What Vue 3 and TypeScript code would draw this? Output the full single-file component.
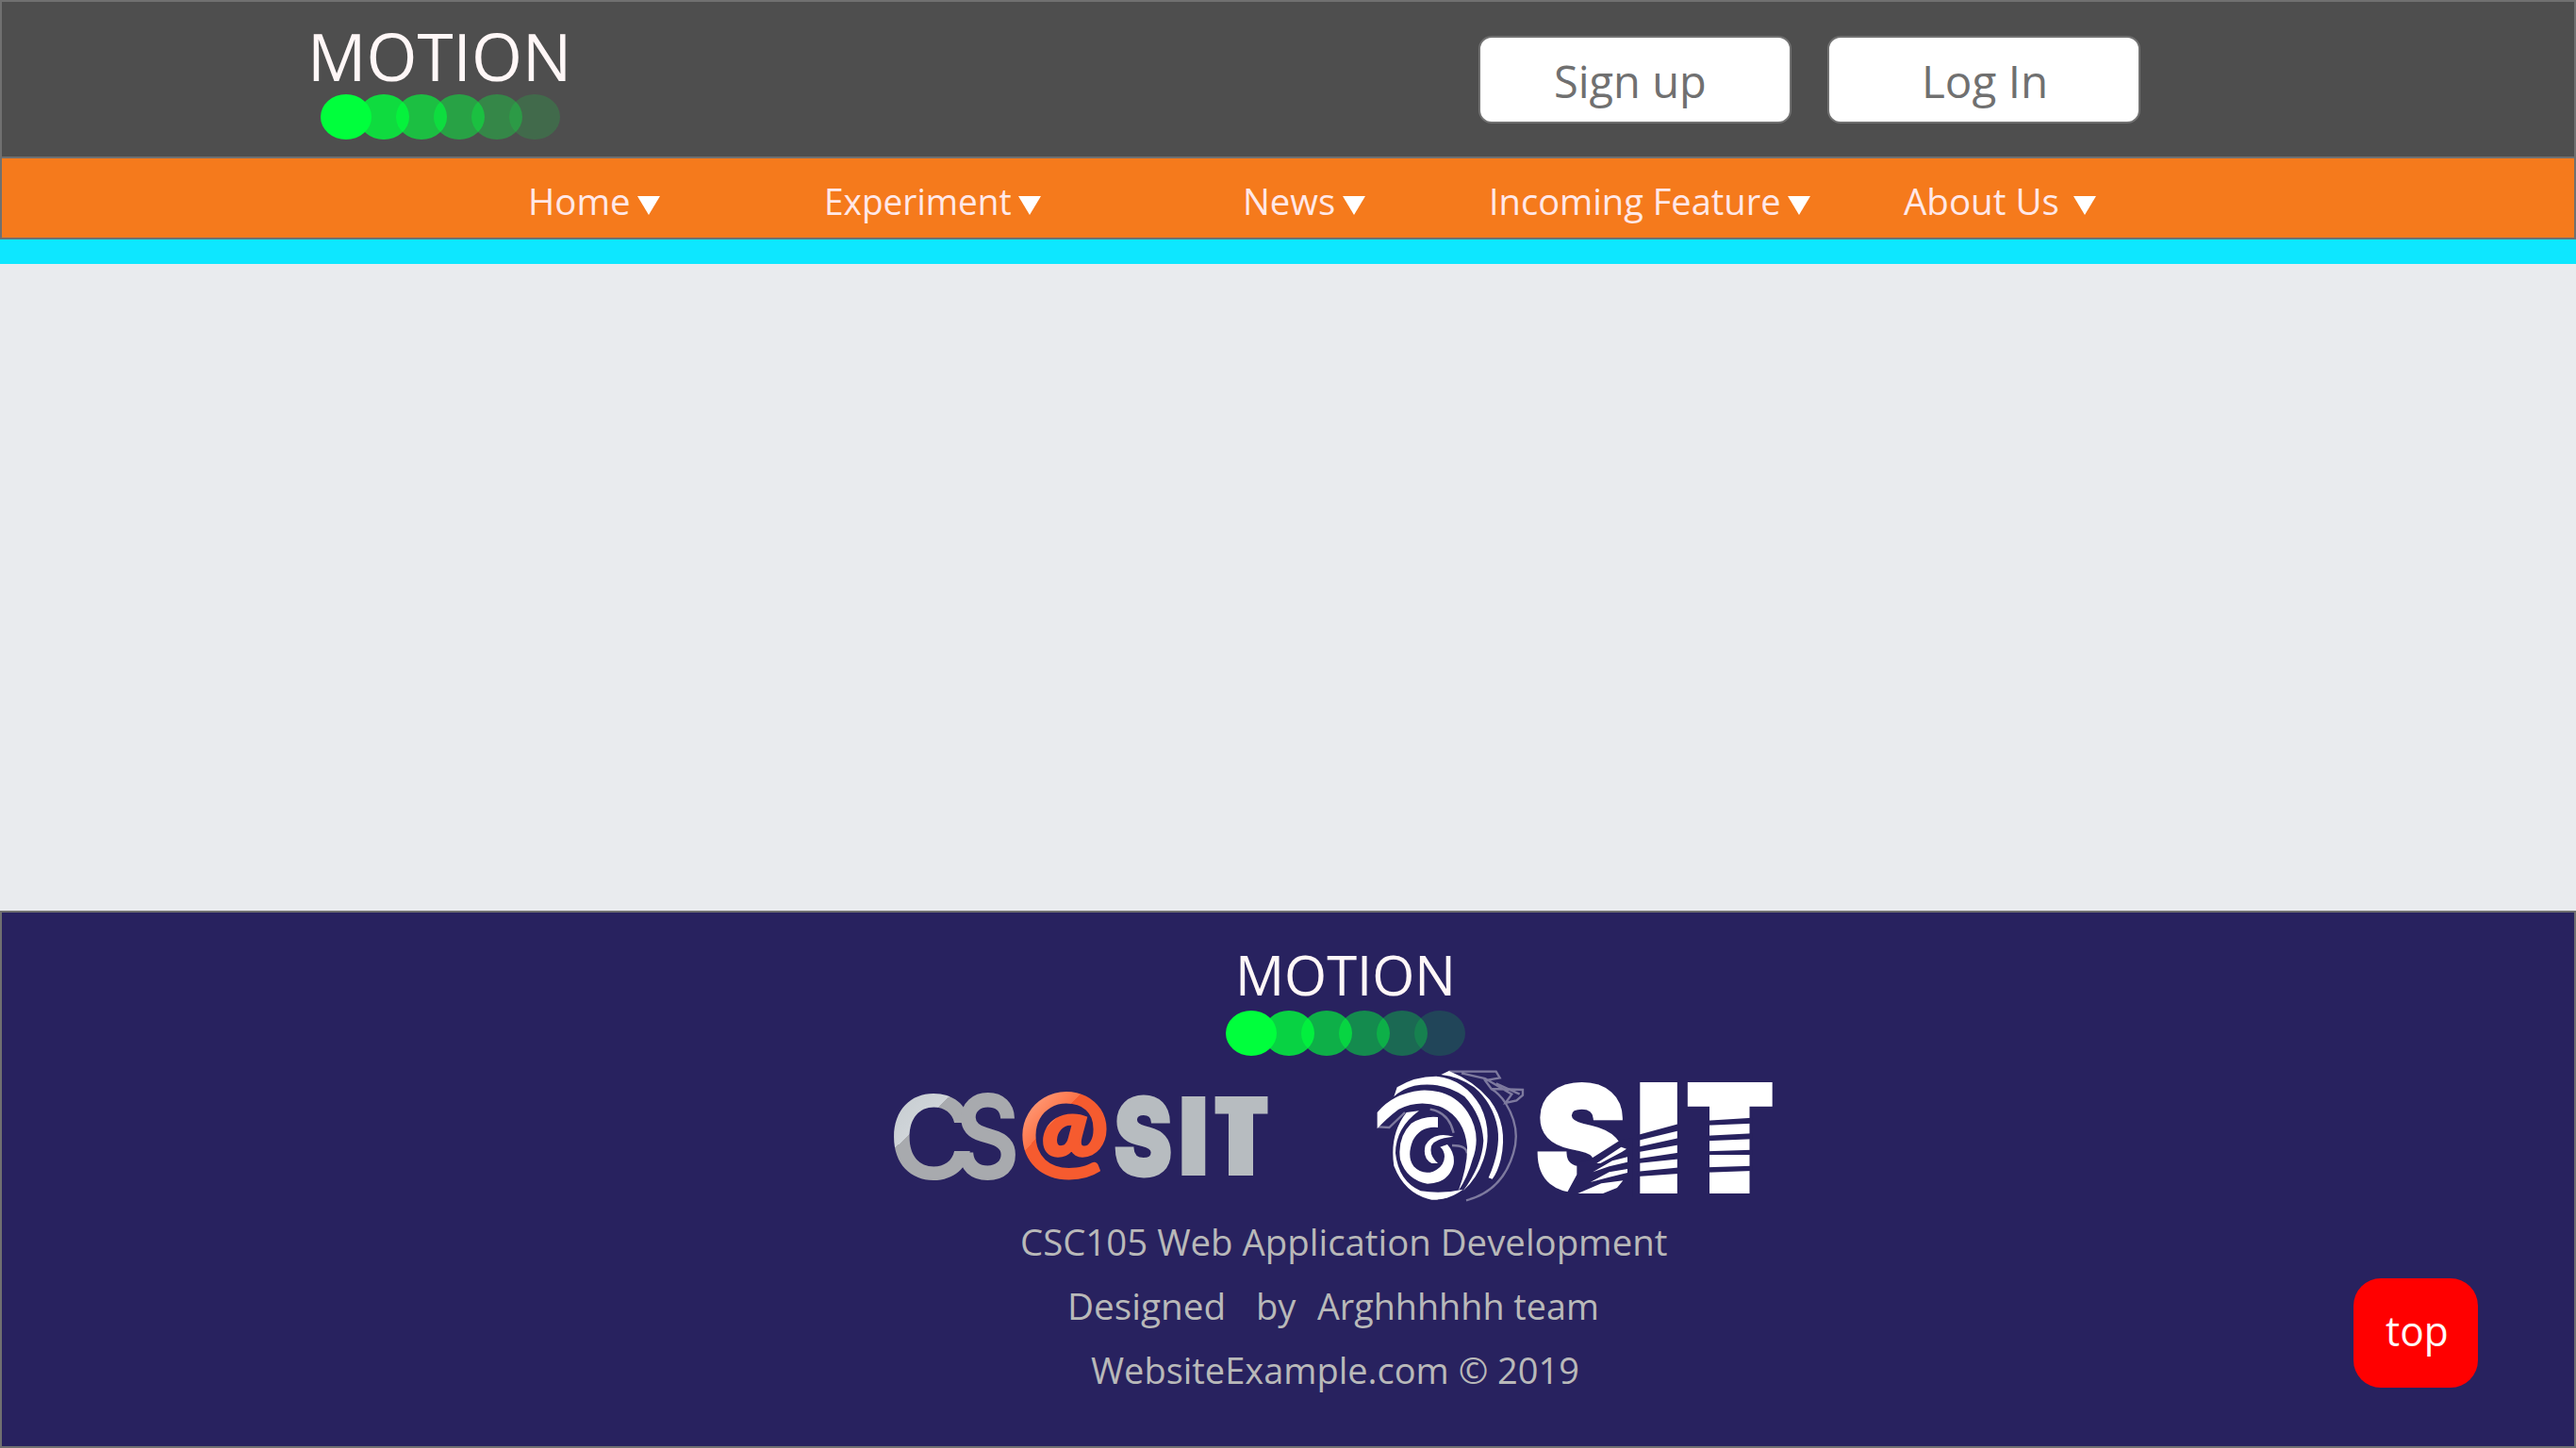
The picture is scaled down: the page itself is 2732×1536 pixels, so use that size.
<script setup lang="ts">
import { h, type FunctionalComponent } from 'vue'

interface LabelProps {
  text: string
  size: number
  width: number
}

// One line of text, set to a fixed advance width. The box is exactly as high as the capitals.
const Label: FunctionalComponent<LabelProps> = (props) => {
  const cap = Math.round(props.size * 0.714)
  return h('svg', { width: props.width, height: cap, style: { overflow: 'visible', display: 'block', flex: 'none' } }, [
    h(
      'text',
      {
        x: 0,
        y: cap,
        'font-size': props.size,
        textLength: props.width,
        lengthAdjust: 'spacingAndGlyphs',
        fill: 'currentColor',
        style: { whiteSpace: 'pre' },
      },
      props.text,
    ),
  ])
}
Label.props = ['text', 'size', 'width']

const fades: number[] = [1, 0.8, 0.64, 0.48, 0.32, 0.16]

const Dots: FunctionalComponent = () =>
  h(
    'svg',
    { width: 254, height: 48, viewBox: '0 0 254 48', style: { display: 'block' } },
    fades.map((o, i) => h('ellipse', { cx: 27 + i * 40, cy: 24, rx: 27, ry: 24, fill: '#00ff3c', 'fill-opacity': o })),
  )

interface NavItem {
  label: string
  width: number
  before: number
  gap: number
}

const nav: NavItem[] = [
  { label: 'Home', width: 108.7, before: 558, gap: 7 },
  { label: 'Experiment', width: 198.7, before: 174.3, gap: 7.3 },
  { label: 'News', width: 98.3, before: 213.7, gap: 8 },
  { label: 'Incoming Feature', width: 309.6, before: 130.9, gap: 7.2 },
  { label: 'About Us', width: 164.9, before: 99.4, gap: 15 },
]
</script>

<template>
  <div class="page">
    <header class="header">
      <div class="brand">
        <Label text="MOTION" :size="70" :width="280.2" />
        <Dots class="brand-dots" />
      </div>
      <div class="auth">
        <button class="auth-btn" type="button"><Label text="Sign up" :size="47.6" :width="161.7" /></button>
        <button class="auth-btn login" type="button"><Label text="Log In" :size="47.6" :width="134.2" /></button>
      </div>
    </header>

    <nav class="nav">
      <a v-for="item in nav" :key="item.label" class="nav-item" :style="{ marginLeft: item.before + 'px' }">
        <Label :text="item.label" :size="39.2" :width="item.width" />
        <svg class="caret" :style="{ marginLeft: item.gap + 'px' }" width="24" height="20" viewBox="0 0 24 20">
          <path d="M0 0H24L12 20Z" fill="#fff" />
        </svg>
      </a>
    </nav>
    <div class="stripe"></div>

    <main class="content"></main>

    <footer class="footer">
      <Label class="f-title" text="MOTION" :size="59" :width="234" />
      <Dots class="f-dots" />

      <div class="logos">
        <svg class="cs-logo" width="420" height="110" viewBox="940 1150 420 110">
          <defs>
            <linearGradient id="cShine" gradientUnits="userSpaceOnUse" x1="6.8" y1="-73.8" x2="53.2" y2="-25.4">
              <stop offset="0" stop-color="#c6ccd0" />
              <stop offset="0.5" stop-color="#d0d5d9" />
              <stop offset="0.5" stop-color="#a8aaae" />
            </linearGradient>
            <linearGradient id="atShine" gradientUnits="userSpaceOnUse" x1="8" y1="-66" x2="60" y2="-16">
              <stop offset="0" stop-color="#ff9f7d" />
              <stop offset="0.46" stop-color="#fd7549" />
              <stop offset="0.46" stop-color="#f65b2f" />
            </linearGradient>
          </defs>
          <g font-size="100">
            <text class="inter-semi" transform="translate(941.7 1250.5) scale(1.26 1.24)" fill="url(#cShine)">C</text>
            <text class="inter-semi" transform="translate(1013.3 1250) scale(1.04 1.225)" fill="#a8aaae" stroke="#a8aaae" stroke-width="1.6">S</text>
            <text class="lato-black" transform="translate(1081 1237) scale(1.125 1.1)" fill="url(#atShine)" stroke="url(#atShine)" stroke-width="2.6">@</text>
            <g fill="#b7bcc0" stroke="#b7bcc0">
              <text class="inter-black" transform="translate(1181.3 1247) scale(0.93 1.14)" stroke-width="2.5">S</text>
              <text class="inter-black" transform="translate(1247.5 1247) scale(1.26 1.158)" stroke="none">I</text>
              <text class="inter-black" transform="translate(1286.2 1247) scale(0.883 1.158)" stroke="none">T</text>
              <rect x="1303" y="1170" width="26" height="77" stroke="none" />
            </g>
          </g>
        </svg>

        <svg class="sit-logo" width="430" height="144" viewBox="1456 1130 430 144">
          <g transform="translate(1440 1120) scale(0.33333)" fill="#fff">
            <path d="M62 232V180Q110 120 200 110Q300 105 350 180Q395 250 365 330Q350 385 320 430Q350 350 348 290Q340 200 270 165Q200 135 130 170Q90 200 62 232Z" />
            <path d="M115 130L125 100Q180 65 250 65Q340 75 390 160Q430 240 400 330Q380 390 335 430Q395 350 400 270Q395 190 340 130Q270 80 180 95Q140 105 115 130Z" />
            <path d="M265 60L290 48Q370 80 420 140Q480 220 455 330Q445 370 428 392L416 388Q455 300 445 230Q430 150 370 100Q320 65 265 60Z" />
            <path d="M255 195V228Q200 222 175 270Q155 320 178 352Q205 380 240 368Q275 352 276 320Q275 300 262 290L285 282Q310 310 305 345Q290 405 222 407Q155 395 135 330Q125 260 170 215Q210 190 255 195Z" />
            <path d="M155 180L195 175Q120 230 120 310Q130 400 200 430Q270 440 335 425Q290 460 235 458Q150 440 115 350Q100 250 155 180Z" />
            <path d="M305 257Q240 240 215 285Q205 325 235 342H255Q225 315 235 285Q250 262 305 257Z" />
            <g fill="none" stroke="#fff" stroke-width="7" opacity="0.4">
              <path d="M470 150Q520 230 495 310Q460 430 345 460" />
              <path d="M290 50H440L452 70L405 78L425 105L525 108V125L505 142L470 150L490 122L405 72L330 55" />
              <path d="M425 105Q450 120 470 150M440 88L515 122M66 226L100 228L150 180M230 170Q290 180 305 245M300 285Q345 285 348 310" />
            </g>
          </g>
          <g font-size="100" fill="#fff">
            <text class="inter-black" transform="translate(1628.6 1262.500) scale(1.44 1.53)" stroke="#fff" stroke-width="2.6">S</text>
            <text class="inter-black" transform="translate(1730 1266) scale(2 1.616)">I</text>
            <text class="inter-black" transform="translate(1786 1266) scale(1.42 1.616)">T</text>
            <rect x="1813" y="1170" width="42.500" height="96" />
          </g>
          <g transform="translate(1610 1120) scale(0.33333)">
            <path d="M228 330L326 268L365 262V450H148L187 378V340Z" fill="#28225f" />
            <path d="M250 342L328 290L345 296L330 306L262 342ZM238 370L300 334L348 322V338L290 352ZM230 402L290 370L348 360V372L290 386ZM190 438L265 406L334 397L315 420L270 438Z" fill="#fff" />
            <g fill="#28225f">
              <path d="M380 252L512 216V238L380 270ZM380 290L512 261V283L380 307ZM380 328L512 308V328L380 342ZM380 368L512 355V375L380 384Z" />
              <path d="M600 206L745 197V215L600 221ZM600 254L745 247V265L600 271ZM600 304L745 299V315H600ZM600 355L745 350V366L600 371Z" />
            </g>
          </g>
        </svg>
      </div>

      <div class="credits">
        <Label class="line1" text="CSC105 Web Application Development" :size="39.2" :width="686.4" />
        <div class="line2">
          <Label text="Designed" :size="39.2" :width="168.2" />
          <Label class="by" text="by" :size="39.2" :width="42.4" />
          <Label class="team" text="Arghhhhhh team" :size="39.2" :width="298.8" />
        </div>
        <Label class="line3" text="WebsiteExample.com © 2019" :size="39.2" :width="518" />
      </div>
      <button class="top-btn" type="button"><Label text="top" :size="43" :width="66.7" /></button>
    </footer>
  </div>
</template>

<style scoped>
.page {
  width: 2732px;
  height: 1536px;
  display: flex;
  flex-direction: column;
  overflow: hidden;
  background: #e9ebee;
  font-family: "Open Sans", sans-serif;
}
.page * {
  box-sizing: border-box;
}
.header {
  height: 168px;
  flex: none;
  display: flex;
  border: 2px solid #707070;
  background: #4e4e4e;
}
.brand {
  margin-left: 324px;
  padding-top: 34px;
  color: #fff7f7;
}
.brand-dots {
  margin: 14px 0 0 14px;
}
.auth {
  display: flex;
  gap: 38px;
  margin-left: auto;
  margin-right: 460px;
  padding-top: 36px;
}
.auth-btn {
  width: 332px;
  height: 93px;
  display: flex;
  align-items: flex-start;
  padding: 30px 0 0 78px;
  border: 2px solid #707070;
  border-radius: 14px;
  background: #fff;
  color: #707070;
  font-family: inherit;
}
.auth-btn.login {
  padding-left: 98px;
}
.nav {
  height: 86px;
  flex: none;
  display: flex;
  align-items: flex-start;
  padding-top: 32px;
  border: 2px solid #707070;
  border-top: 0;
  background: #f57a1c;
  color: #ffe8e8;
}
.nav-item {
  display: flex;
  flex: none;
}
.caret {
  display: block;
  flex: none;
  margin-top: 8px;
}
.stripe {
  height: 26px;
  flex: none;
  background: #0de7ff;
}
.content {
  flex: 1;
}
.footer {
  position: relative;
  height: 570px;
  flex: none;
  display: flex;
  flex-direction: column;
  align-items: flex-start;
  padding-top: 46px;
  border: 2px solid #707070;
  background: #28225f;
}
.f-title {
  margin-left: 1308px;
  color: #fff7f7;
}
.f-dots {
  margin: 16px 0 0 1298px;
}
.logos {
  display: flex;
  align-items: flex-start;
  height: 144px;
  margin: 10px 0 0 938px;
}
.cs-logo {
  margin-top: 20px;
  overflow: visible;
}
.sit-logo {
  margin-left: 96px;
  overflow: visible;
}
.inter-semi {
  font-family: Inter, sans-serif;
  font-weight: 600;
}
.inter-black {
  font-family: Inter, sans-serif;
  font-weight: 900;
}
.lato-black {
  font-family: Lato, sans-serif;
  font-weight: 900;
}
.credits {
  display: flex;
  flex-direction: column;
  gap: 40px;
  margin-top: 30px;
  color: #b9b9b9;
}
.line1 {
  margin-left: 1080.2px;
}
.line2 {
  display: flex;
  margin-left: 1129.5px;
}
.by {
  margin-left: 32.5px;
}
.team {
  margin-left: 22px;
}
.line3 {
  margin-left: 1154.6px;
}
.top-btn {
  position: absolute;
  right: 102px;
  bottom: 62px;
  width: 132px;
  height: 116px;
  display: flex;
  padding: 41px 0 0 33.8px;
  border: 0;
  border-radius: 29px;
  background: #f00;
  color: #fff7f7;
  font-family: inherit;
}
</style>

<style>
body {
  margin: 0;
}
</style>
